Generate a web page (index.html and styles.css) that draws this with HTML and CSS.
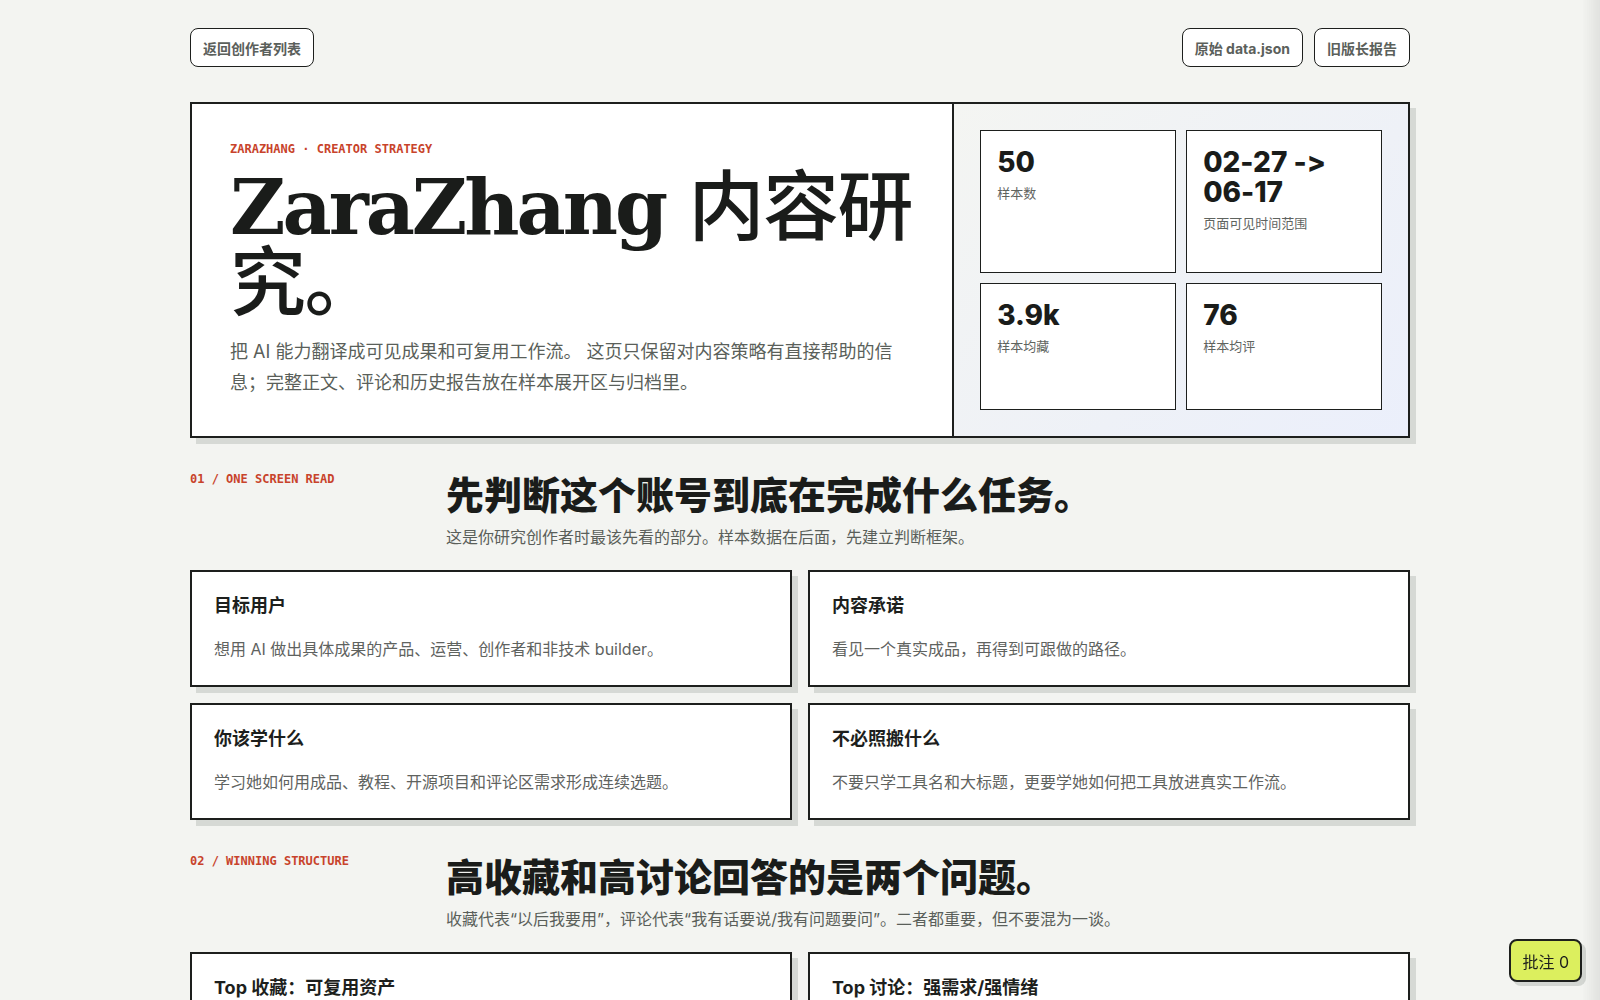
FILE: index.html
```html
<!DOCTYPE html>
<html lang="zh-CN">
<head>
  <meta charset="UTF-8">
  <meta name="viewport" content="width=device-width, initial-scale=1.0">
  <title>ZaraZhang 内容研究</title>
  <link rel="stylesheet" href="styles.css">
</head>
<body>
  <div class="page">
    <nav class="topbar">
      <a href="#" class="pill">返回创作者列表</a>
      <div class="topbar-right">
        <a href="#" class="pill">原始 data.json</a>
        <a href="#" class="pill">旧版长报告</a>
      </div>
    </nav>

    <header class="hero">
      <div class="hero-main">
        <div class="eyebrow">ZARAZHANG · CREATOR STRATEGY</div>
        <h1>ZaraZhang <span class="cjk">内容研究。</span></h1>
        <p class="lead">把 AI 能力翻译成可见成果和可复用工作流。 这页只保留对内容策略有直接帮助的信息；完整正文、评论和历史报告放在样本展开区与归档里。</p>
      </div>
      <div class="hero-stats">
        <div class="stat">
          <div class="stat-value">50</div>
          <div class="stat-label">样本数</div>
        </div>
        <div class="stat">
          <div class="stat-value">02-27 -&gt;<br>06-17</div>
          <div class="stat-label">页面可见时间范围</div>
        </div>
        <div class="stat">
          <div class="stat-value">3.9k</div>
          <div class="stat-label">样本均藏</div>
        </div>
        <div class="stat">
          <div class="stat-value">76</div>
          <div class="stat-label">样本均评</div>
        </div>
      </div>
    </header>

    <section class="section">
      <div class="section-head">
        <div class="section-tag">01 / ONE SCREEN READ</div>
        <div>
          <h2>先判断这个账号到底在完成什么任务。</h2>
          <p class="section-sub">这是你研究创作者时最该先看的部分。样本数据在后面，先建立判断框架。</p>
        </div>
      </div>
      <div class="card-grid">
        <div class="card">
          <h3>目标用户</h3>
          <p>想用 AI 做出具体成果的产品、运营、创作者和非技术 builder。</p>
        </div>
        <div class="card">
          <h3>内容承诺</h3>
          <p>看见一个真实成品，再得到可跟做的路径。</p>
        </div>
        <div class="card">
          <h3>你该学什么</h3>
          <p>学习她如何用成品、教程、开源项目和评论区需求形成连续选题。</p>
        </div>
        <div class="card">
          <h3>不必照搬什么</h3>
          <p>不要只学工具名和大标题，更要学她如何把工具放进真实工作流。</p>
        </div>
      </div>
    </section>

    <section class="section">
      <div class="section-head">
        <div class="section-tag">02 / WINNING STRUCTURE</div>
        <div>
          <h2>高收藏和高讨论回答的是两个问题。</h2>
          <p class="section-sub">收藏代表“以后我要用”，评论代表“我有话要说/我有问题要问”。二者都重要，但不要混为一谈。</p>
        </div>
      </div>
      <div class="card-grid">
        <div class="card">
          <h3>Top 收藏：可复用资产</h3>
          <p>教程、提示词、工具清单和可以直接照做的步骤，读者会先存下来再用。</p>
        </div>
        <div class="card">
          <h3>Top 讨论：强需求/强情绪</h3>
          <p>求资源、求方法、对行业变化的焦虑与判断，评论区会自然变长。</p>
        </div>
      </div>
    </section>
  </div>

  <button class="note-btn">批注 0</button>
</body>
</html>
```

FILE: styles.css
```css
body {
  margin: 0;
  padding: 0;
  background-color: #f3f4f1;
  color: #1d1f1d;
  font-family: Inter, "Noto Sans CJK SC", sans-serif;
  font-feature-settings: "calt" 0;
}

body::after {
  content: "";
  position: fixed;
  top: 0;
  right: 0;
  bottom: 0;
  width: 18px;
  background: linear-gradient(to right, rgba(0, 0, 0, 0), rgba(0, 0, 0, 0.07));
  pointer-events: none;
}

.page {
  max-width: 1220px;
  margin: 0 auto;
  padding: 28px 0 60px;
}

.topbar {
  display: flex;
  justify-content: space-between;
  align-items: center;
  margin-bottom: 35px;
}

.topbar-right {
  display: flex;
  gap: 11px;
}

.pill {
  display: inline-flex;
  align-items: center;
  height: 39px;
  padding: 0 12px;
  box-sizing: border-box;
  border: 1px solid #1d1f1d;
  border-radius: 8px;
  background-color: #fff;
  color: #5b605b;
  font-size: 14px;
  font-weight: 700;
  text-decoration: none;
}

/* hero */
.hero {
  display: grid;
  grid-template-columns: minmax(0, 1.68fr) minmax(0, 1fr);
  border: 2px solid #1d1f1d;
  background-color: #fff;
  box-shadow: 6px 6px 0 #d6d9d5;
}

.hero-main {
  padding: 36px 40px 38px 38px;
  border-right: 2px solid #1d1f1d;
}

.eyebrow,
.section-tag {
  font-family: "DejaVu Sans Mono", "Liberation Mono", monospace;
  font-size: 12px;
  font-weight: 700;
  line-height: 18px;
  color: #c8432b;
}

h1 {
  margin: 12px 0 0;
  font-family: "DejaVu Serif", "Noto Sans CJK SC", serif;
  font-size: 76px;
  font-weight: 700;
  line-height: 76px;
  letter-spacing: -0.04em;
  color: #1a1c1a;
}

h1 .cjk {
  font-weight: 500;
  letter-spacing: -0.02em;
}

.lead {
  margin: 14px 0 0;
  font-size: 18px;
  line-height: 31px;
  color: #5a5f5a;
}

.hero-stats {
  display: grid;
  grid-template-columns: 1fr 1fr;
  grid-template-rows: minmax(0, 1.12fr) minmax(0, 1fr);
  gap: 10px;
  padding: 26px;
  background: linear-gradient(135deg, #f4f5f2 0%, #eef1f7 60%, #ebeffb 100%);
}

.stat {
  padding: 16px 16px;
  border: 1px solid #1d1f1d;
  background-color: #fff;
}

.stat-value {
  font-size: 28px;
  font-weight: 800;
  line-height: 30px;
  color: #1a1c1a;
}

.stat-label {
  margin-top: 6px;
  font-size: 13px;
  line-height: 20px;
  color: #5f645f;
}

/* sections */
.section {
  margin-top: 35px;
}

.section-head {
  display: grid;
  grid-template-columns: 220px 1fr;
  gap: 36px;
  margin-bottom: 20px;
}

.section-tag {
  line-height: 12px;
}

h2 {
  margin: 0;
  font-size: 38px;
  font-weight: 800;
  line-height: 44px;
  color: #1a1c1a;
}

.section-sub {
  margin: 8px 0 0;
  font-size: 16px;
  line-height: 25px;
  color: #5a5f5a;
}

.card-grid {
  display: grid;
  grid-template-columns: 1fr 1fr;
  gap: 16px;
}

.card {
  padding: 20px 22px 23px;
  border: 2px solid #1d1f1d;
  background-color: #fff;
  box-shadow: 6px 6px 0 #d6d9d5;
}

.card h3 {
  margin: 0;
  font-size: 18px;
  font-weight: 700;
  line-height: 27px;
}

.card p {
  margin: 18px 0 0;
  font-size: 16px;
  line-height: 25px;
  color: #5f635f;
}

.note-btn {
  position: fixed;
  right: 18px;
  bottom: 18px;
  height: 43px;
  padding: 0 11px;
  border: 2px solid #1d1f1d;
  border-radius: 8px;
  background-color: #dcef5e;
  color: #1d1f1d;
  font-family: Inter, "Noto Sans CJK SC", sans-serif;
  font-size: 16px;
  box-shadow: 4px 4px 0 #d3d6d2;
  cursor: pointer;
}
```
